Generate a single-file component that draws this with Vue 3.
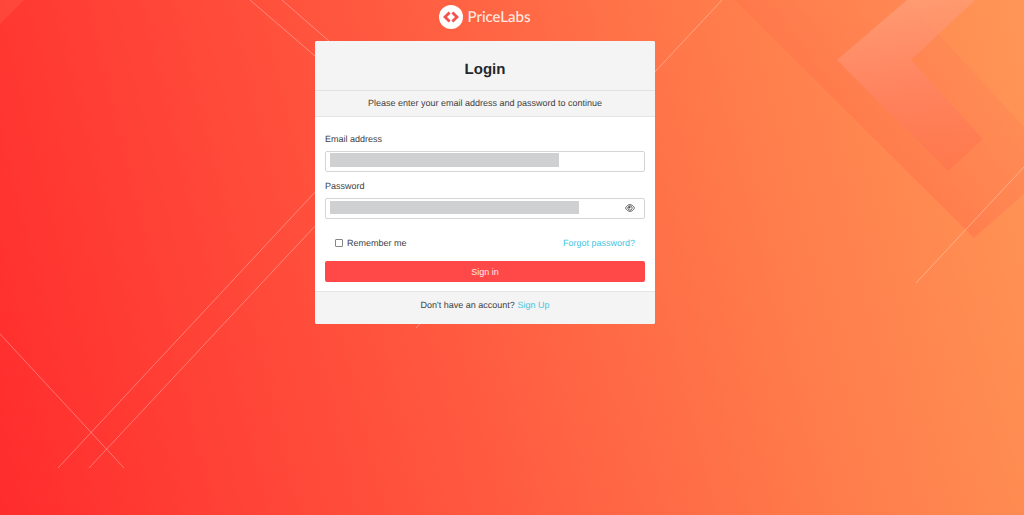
<script setup>
import { ref } from 'vue'

const email = ref('')
const password = ref('')
const remember = ref(false)
const showPassword = ref(false)
</script>

<template>
  <div class="page">
    <svg class="backdrop" viewBox="0 0 1024 515" preserveAspectRatio="xMidYMin slice" aria-hidden="true">
      <defs>
        <linearGradient id="band" gradientUnits="userSpaceOnUse" x1="900" y1="200" x2="1000" y2="100">
          <stop offset="0" stop-color="#ff7048" stop-opacity="0.6" />
          <stop offset="0.5" stop-color="#ff7c50" stop-opacity="0.55" />
          <stop offset="1" stop-color="#ff8455" stop-opacity="0.5" />
        </linearGradient>
        <linearGradient id="chevron" gradientUnits="userSpaceOnUse" x1="890" y1="0" x2="930" y2="171">
          <stop offset="0" stop-color="#ffa27e" stop-opacity="0.7" />
          <stop offset="0.5" stop-color="#ff8464" stop-opacity="0.75" />
          <stop offset="1" stop-color="#ff704b" stop-opacity="0.5" />
        </linearGradient>
      </defs>
      <path d="M735 0H907L1024 127V194L974 238Z" fill="url(#band)" />
      <path d="M907 0H975L911 60L983 139L948 171L837 60Z" fill="url(#chevron)" />
      <path d="M0 0H24L0 24Z" fill="#ff9a70" fill-opacity="0.15" />
      <g class="lines">
        <path d="M250 0L330 69M282 0L346 56" />
        <path d="M58 468L330 176M89 468L330 210M0 334L124 468" />
        <path d="M722 0L416 328M1024 167L916 283" />
      </g>
    </svg>

    <header class="brand">
      <svg class="mark" viewBox="0 0 24 24" aria-hidden="true">
        <circle cx="12" cy="12" r="12" fill="#fff" />
        <g fill="none" stroke="#f4524c" stroke-width="2.8">
          <path d="M10.600 7.400L6 12L10.600 16.600" />
          <path d="M13.400 7.400L18 12L13.400 16.600" />
        </g>
      </svg>
      <span class="name">PriceLabs</span>
    </header>

    <main class="card">
      <h1>Login</h1>
      <p class="intro">Please enter your email address and password to continue</p>
      <form @submit.prevent>
        <label for="email">Email address</label>
        <div class="field">
          <input id="email" v-model="email" type="email" />
          <span class="mask mask-email"></span>
        </div>
        <label for="password">Password</label>
        <div class="field">
          <input id="password" v-model="password" :type="showPassword ? 'text' : 'password'" />
          <span class="mask mask-password"></span>
          <button class="eye" type="button" aria-label="Show password" @click="showPassword = !showPassword">
            <svg viewBox="0 0 20 16" fill="none" stroke="#444" stroke-width="1.6">
              <path d="M1 8C5 -1 15 -1 19 8C15 17 5 17 1 8Z" />
              <circle cx="10" cy="8" r="4.4" />
              <path d="M7.5 8A2.5 2.5 0 0 1 10 5.5V8Z" fill="#444" />
            </svg>
          </button>
        </div>
        <div class="options">
          <label class="remember" for="remember">
            <input id="remember" v-model="remember" type="checkbox" />
            <span>Remember me</span>
          </label>
          <a class="forgot" href="#">Forgot password?</a>
        </div>
        <button class="submit" type="submit">Sign in</button>
      </form>
      <footer>Don't have an account? <a href="#">Sign Up</a></footer>
    </main>
  </div>
</template>

<style>
body {
  margin: 0;
}
</style>

<style scoped>
* {
  box-sizing: border-box;
}

.page {
  position: relative;
  min-height: 100vh;
  padding: 5px 70px 24px 16px;
  overflow: hidden;
  display: flex;
  flex-direction: column;
  align-items: center;
  gap: 12px;
  background: linear-gradient(76deg, #ff2c2d 0%, #ff5c41 45%, #ff7b4b 72%, #ff9656 100%);
  color: #414141;
  font: 9px/12px "Liberation Sans", Arial, sans-serif;
  text-rendering: geometricPrecision;
}

.backdrop {
  position: absolute;
  inset: 0;
  width: 100%;
  height: 100%;
}

.lines {
  fill: none;
  stroke: #fff;
  stroke-opacity: 0.32;
  stroke-width: 1;
}

.brand {
  position: relative;
  display: flex;
  align-items: center;
  gap: 4px;
  height: 24px;
}

.mark {
  width: 24px;
  height: 24px;
}

.name {
  color: #ffe9e2;
  font: 500 15px/24px Lato, "Open Sans", sans-serif;
}

.card {
  position: relative;
  width: 100%;
  max-width: 340px;
  border-radius: 2px;
  overflow: hidden;
  background: #fff;
}

h1 {
  margin: 0;
  padding: 19px 10px 10px;
  border-bottom: 1px solid #e2e2e2;
  background: #f4f4f4;
  color: #23272b;
  font-size: 15px;
  line-height: 20px;
  text-align: center;
}

.intro {
  margin: 0;
  padding: 6px 10px 7px;
  border-bottom: 1px solid #e6e6e6;
  background: #f4f4f4;
  text-align: center;
}

form {
  display: flex;
  flex-direction: column;
  padding: 16px 10px 9px;
}

.field {
  position: relative;
  margin: 6px 0 8px;
}

.field input {
  display: block;
  width: 100%;
  height: 21px;
  padding: 0 30px 0 6px;
  border: 1px solid #d2d4d6;
  border-radius: 2px;
  background: #fff;
  color: inherit;
  font: inherit;
}

.mask {
  position: absolute;
  left: 5px;
  top: 2px;
  height: 14px;
  background: #cfd0d1;
  pointer-events: none;
}

.mask-email {
  width: 229px;
}

.mask-password {
  top: 3px;
  width: 249px;
  height: 13px;
}

.eye {
  position: absolute;
  right: 10px;
  top: 6px;
  width: 10px;
  height: 8px;
  padding: 0;
  border: 0;
  background: none;
}

.eye svg {
  display: block;
  width: 10px;
  height: 8px;
}

.options {
  display: flex;
  align-items: center;
  justify-content: space-between;
  padding: 10px 10px 12px;
}

.remember {
  display: flex;
  align-items: center;
  gap: 4px;
}

.remember input {
  appearance: none;
  width: 8px;
  height: 8px;
  margin: 0;
  border: 1px solid #858585;
  border-radius: 1px;
  background: #fff;
}

.remember input:checked {
  background: #ff4848;
}

a {
  color: #3fc6df;
  text-decoration: none;
}

.submit {
  height: 21px;
  padding: 0;
  border: 0;
  border-radius: 2px;
  background: #ff4848;
  color: #ffe9e9;
  font: inherit;
}

footer {
  padding: 7px 10px 13px;
  border-top: 1px solid #e6e6e6;
  background: #f4f4f4;
  text-align: center;
}
</style>
